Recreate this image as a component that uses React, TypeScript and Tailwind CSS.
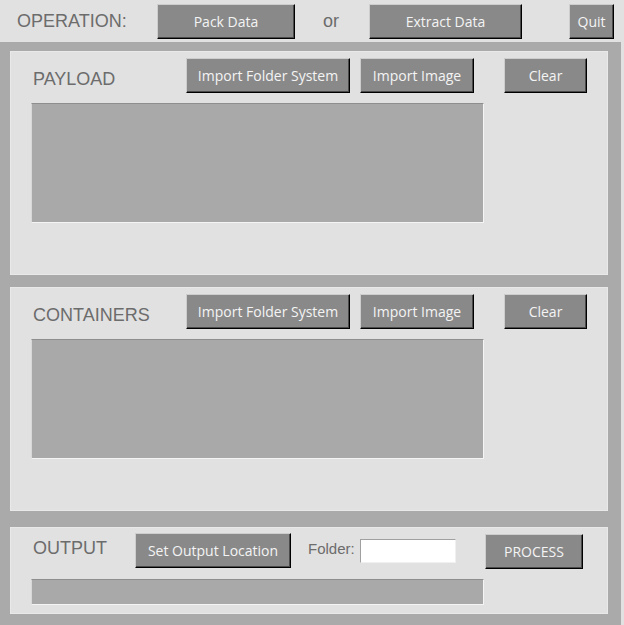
import React from 'react';

const labelFont = { fontFamily: '"Liberation Sans", Arial, sans-serif' };
const btnFont = { fontFamily: '"Open Sans", "Noto Sans", sans-serif' };

function Btn({ label, className = '' }: { label: string; className?: string }) {
  return (
    <button
      style={btnFont}
      className={`h-[35px] shrink-0 bg-[#898989] text-[14px] leading-none text-[#f4f4f4] border border-t-[#cdcdcd] border-l-[#cdcdcd] border-r-black border-b-black shadow-[inset_-1px_-1px_0_#4a4a4a] ${className}`}
    >
      {label}
    </button>
  );
}

function ListArea({ className = '' }: { className?: string }) {
  return (
    <div
      className={`ml-[20px] w-[453px] bg-[#a9a9a9] border border-t-[#8e8e8e] border-l-[#d8d8d8] border-r-[#f4f4f4] border-b-[#f4f4f4] ${className}`}
    />
  );
}

function SourcePanel({ title, className = '' }: { title: string; className?: string }) {
  return (
    <section className={`w-[598px] h-[224px] bg-[#e1e1e1] border border-[#e9e9e9] pt-[6px] ${className}`}>
      <div className="flex items-start pl-[22px]">
        <span style={labelFont} className="mt-[12px] w-[153px] text-[18px] leading-[18px] text-[#6c6c6c]">
          {title}
        </span>
        <Btn label="Import Folder System" className="w-[164px]" />
        <Btn label="Import Image" className="ml-[10px] w-[114px]" />
        <Btn label="Clear" className="ml-[30px] w-[83px]" />
      </div>
      <ListArea className="mt-[10px] h-[120px] ml-[19px]" />
    </section>
  );
}

export default function App() {
  return (
    <div className="w-[624px] h-[625px] bg-[#e1e1e1] overflow-hidden flex flex-col">
      {/* operation bar */}
      <header className="h-[42px] shrink-0 flex items-start pt-[4px] pl-[17px]">
        <span style={labelFont} className="mt-[8px] w-[140px] text-[18px] leading-[18px] text-[#6c6c6c]">
          OPERATION:
        </span>
        <Btn label="Pack Data" className="w-[138px]" />
        <span style={labelFont} className="mt-[8px] w-[74px] pl-[28px] text-[18px] leading-[18px] text-[#6c6c6c]">
          or
        </span>
        <Btn label="Extract Data" className="w-[153px]" />
        <Btn label="Quit" className="ml-[47px] w-[45px]" />
      </header>

      <main className="w-[621px] h-[583px] bg-[#aaaaaa] pl-[10px] pt-[9px] flex flex-col">
        <SourcePanel title="PAYLOAD" />
        <SourcePanel title="CONTAINERS" className="mt-[12px]" />

        <section className="mt-[16px] w-[598px] h-[87px] bg-[#e1e1e1] border border-[#e9e9e9] pt-[5px]">
          <div className="flex items-start pl-[22px]">
            <span style={labelFont} className="mt-[6px] w-[102px] text-[18px] leading-[18px] text-[#6c6c6c]">
              OUTPUT
            </span>
            <Btn label="Set Output Location" className="w-[156px]" />
            <span style={labelFont} className="ml-[17px] mt-[8px] w-[52px] text-[15px] leading-[15px] text-[#6c6c6c]">
              Folder:
            </span>
            <input
              type="text"
              className="mt-[6px] w-[96px] h-[24px] bg-white outline-none border border-t-[#a0a0a0] border-l-[#a0a0a0] border-r-[#f0f0f0] border-b-[#f0f0f0]"
            />
            <Btn label="PROCESS" className="ml-[29px] mt-[1px] w-[98px]" />
          </div>
          <ListArea className="mt-[10px] h-[26px] ml-[19px]" />
        </section>
      </main>
    </div>
  );
}
